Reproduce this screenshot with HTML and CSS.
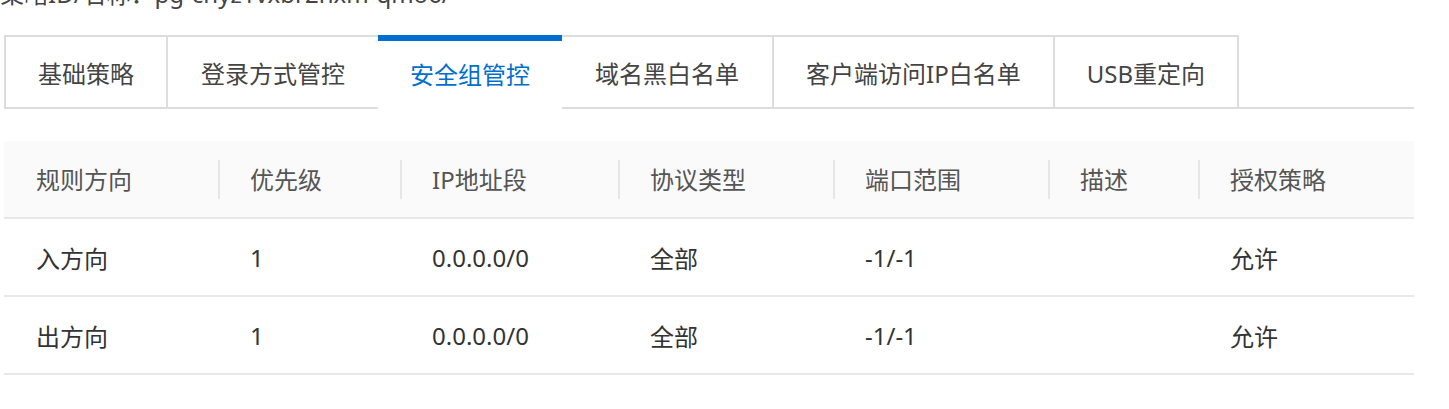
FILE: index.html
```html
<!DOCTYPE html>
<html lang="zh-CN">
<head>
  <meta charset="UTF-8">
  <title>安全组管控</title>
  <link rel="stylesheet" href="styles.css">
</head>
<body>
  <div class="policy-id">策略ID/名称：pg-cnyz1vxbr2nxm-qmo6/</div>

  <div class="tabs">
    <div class="tab">基础策略</div>
    <div class="tab">登录方式管控</div>
    <div class="tab active">安全组管控</div>
    <div class="tab">域名黑白名单</div>
    <div class="tab">客户端访问IP白名单</div>
    <div class="tab">USB重定向</div>
  </div>

  <table class="rules">
    <colgroup>
      <col style="width: 214px">
      <col style="width: 182px">
      <col style="width: 218px">
      <col style="width: 215px">
      <col style="width: 215px">
      <col style="width: 150px">
      <col style="width: 216px">
    </colgroup>
    <thead>
      <tr>
        <th><div class="th-cell first">规则方向</div></th>
        <th><div class="th-cell">优先级</div></th>
        <th><div class="th-cell">IP地址段</div></th>
        <th><div class="th-cell">协议类型</div></th>
        <th><div class="th-cell">端口范围</div></th>
        <th><div class="th-cell">描述</div></th>
        <th><div class="th-cell">授权策略</div></th>
      </tr>
    </thead>
    <tbody>
      <tr>
        <td>入方向</td>
        <td>1</td>
        <td>0.0.0.0/0</td>
        <td>全部</td>
        <td>-1/-1</td>
        <td></td>
        <td>允许</td>
      </tr>
      <tr>
        <td>出方向</td>
        <td>1</td>
        <td>0.0.0.0/0</td>
        <td>全部</td>
        <td>-1/-1</td>
        <td></td>
        <td>允许</td>
      </tr>
    </tbody>
  </table>
</body>
</html>
```

FILE: styles.css
```css
body {
  margin: 0;
  font-family: "Noto Sans", "Noto Sans CJK SC", sans-serif;
  font-size: 24px;
  color: #333;
  background: #fff;
  overflow: hidden;
}
.policy-id {
  margin-top: -22px;
  line-height: 32px;
  color: #444;
  white-space: nowrap;
}
.tabs {
  display: flex;
  margin: 25px 35px 0 4px;
  border-bottom: 2px solid #ddd;
}
.tab {
  box-sizing: border-box;
  height: 72px;
  padding: 0 32px;
  display: flex;
  align-items: center;
  border-top: 2px solid #ddd;
  border-right: 2px solid #ddd;
  color: #444;
  white-space: nowrap;
  cursor: pointer;
}
.tab:first-child {
  border-left: 2px solid #ddd;
}
.tab:nth-child(2),
.tab:nth-child(4) {
  padding: 0 33px;
}
.tab.active {
  height: 74px;
  margin-bottom: -2px;
  margin-left: -2px;
  padding-bottom: 4px;
  border-top: 6px solid #006fcf;
  border-right: none;
  background: #fff;
  color: #006fcf;
}
.rules {
  margin: 32px 0 0 4px;
  width: 1410px;
  table-layout: fixed;
  border-collapse: collapse;
}
.rules th {
  height: 76px;
  padding: 0;
  background: #fafafa;
  border-bottom: 2px solid #e8e8e8;
  font-weight: normal;
  text-align: left;
  color: #555;
}
.th-cell {
  line-height: 39px;
  padding-left: 30px;
  border-left: 2px solid #e6e6e6;
}
.th-cell.first {
  padding-left: 32px;
  border-left: none;
}
.rules td {
  height: 76px;
  padding: 0 0 0 32px;
  border-bottom: 2px solid #e8e8e8;
  white-space: nowrap;
}
```
